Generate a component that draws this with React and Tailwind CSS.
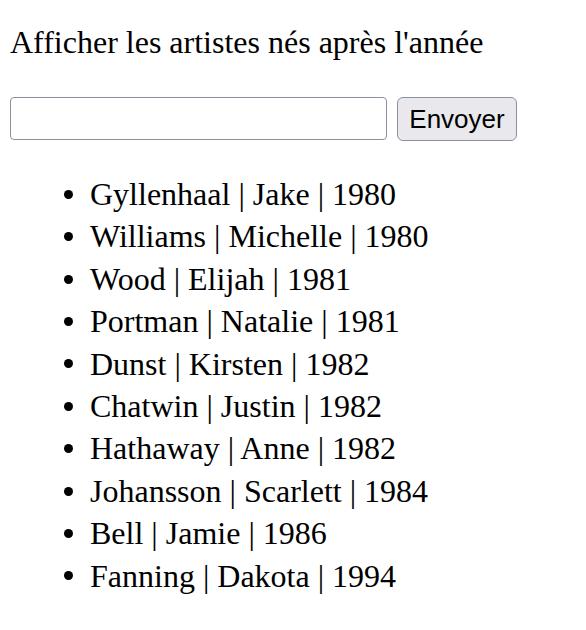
import React from "react";

const artists = [
  "Gyllenhaal | Jake | 1980",
  "Williams | Michelle | 1980",
  "Wood | Elijah | 1981",
  "Portman | Natalie | 1981",
  "Dunst | Kirsten | 1982",
  "Chatwin | Justin | 1982",
  "Hathaway | Anne | 1982",
  "Johansson | Scarlett | 1984",
  "Bell | Jamie | 1986",
  "Fanning | Dakota | 1994",
];

export default function App() {
  return (
    <div className="w-[586px] h-[630px] bg-white text-black font-['Liberation_Serif',serif] text-[32px] leading-[42px]">
      <p className="pl-[10px] pt-[21px]">Afficher les artistes nés après l'année</p>
      <form className="flex items-start pl-[10px] mt-[34px]" onSubmit={(e) => e.preventDefault()}>
        <input
          type="text"
          className="w-[377px] h-[43px] border-[1.5px] border-[#8f8f9d] rounded-[4px] bg-white outline-none"
        />
        <button
          type="submit"
          className="ml-[10px] w-[120px] h-[44px] border-[1.5px] border-[#8f8f9d] rounded-[6px] bg-[#e9e9ed] font-['Liberation_Sans',sans-serif] text-[26px] leading-none text-black"
        >
          Envoyer
        </button>
      </form>
      <ul className="mt-[32px] leading-[42.4px]">
        {artists.map((a) => (
          <li key={a} className="flex items-center">
            <span className="ml-[64px] mr-[17px] w-[9px] h-[9px] rounded-full bg-black shrink-0" />
            <span>{a}</span>
          </li>
        ))}
      </ul>
    </div>
  );
}
